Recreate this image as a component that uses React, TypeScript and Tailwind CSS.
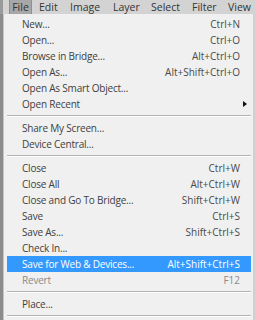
// App.tsx
type Item =
  | { kind: "item"; label: string; shortcut?: string; sub?: boolean; active?: boolean; disabled?: boolean }
  | { kind: "sep" };

const items: Item[] = [
  { kind: "item", label: "New...", shortcut: "Ctrl+N" },
  { kind: "item", label: "Open...", shortcut: "Ctrl+O" },
  { kind: "item", label: "Browse in Bridge...", shortcut: "Alt+Ctrl+O" },
  { kind: "item", label: "Open As...", shortcut: "Alt+Shift+Ctrl+O" },
  { kind: "item", label: "Open As Smart Object..." },
  { kind: "item", label: "Open Recent", sub: true },
  { kind: "sep" },
  { kind: "item", label: "Share My Screen..." },
  { kind: "item", label: "Device Central..." },
  { kind: "sep" },
  { kind: "item", label: "Close", shortcut: "Ctrl+W" },
  { kind: "item", label: "Close All", shortcut: "Alt+Ctrl+W" },
  { kind: "item", label: "Close and Go To Bridge...", shortcut: "Shift+Ctrl+W" },
  { kind: "item", label: "Save", shortcut: "Ctrl+S" },
  { kind: "item", label: "Save As...", shortcut: "Shift+Ctrl+S" },
  { kind: "item", label: "Check In..." },
  { kind: "item", label: "Save for Web & Devices...", shortcut: "Alt+Shift+Ctrl+S", active: true },
  { kind: "item", label: "Revert", shortcut: "F12", disabled: true },
  { kind: "sep" },
  { kind: "item", label: "Place..." },
  { kind: "sep" },
];

const MenuBar = () => (
  <div className="flex h-[14px] items-center bg-[#d3d3d3] text-[10.5px] leading-none text-[#333333]">
    <div className="w-[3px] h-full bg-[#9a9a9a]" />
    <div className="w-[6px]" />
    <div className="w-[23px] h-full flex items-center justify-center bg-[#a7a7a7] border-x border-[#8f8f8f]">File</div>
    <div className="w-[38px] pl-[7px]">Edit</div>
    <div className="w-[43px]">Image</div>
    <div className="w-[38px]">Layer</div>
    <div className="w-[41px]">Select</div>
    <div className="w-[36px]">Filter</div>
    <div className="flex-1">View</div>
  </div>
);

export default function App() {
  return (
    <div
      className="w-[255px] h-[320px] overflow-hidden bg-[#f0f0f0]"
      style={{ fontFamily: '"Open Sans", "Noto Sans", sans-serif' }}
    >
      <MenuBar />
      <div className="flex h-[306px]">
        <div className="w-[3px] bg-[#8c8c8c]" />
        <div className="w-[1px] bg-[#c6c6c6]" />
        <div className="flex-1 bg-[#f0f0f0] pt-[2px] pl-[3px] pr-[2px]">
          {items.map((it, i) =>
            it.kind === "sep" ? (
              <div key={i} className="h-[8px] flex flex-col justify-center">
                <div className="h-px bg-[#b4b4b4]" />
                <div className="h-px bg-white" />
              </div>
            ) : (
              <div
                key={i}
                className={`relative h-[16px] flex items-center justify-between pl-[15px] pr-[11px] text-[10px] leading-none ${
                  it.active ? "bg-[#3399ff] text-white" : it.disabled ? "text-[#8a8a8a]" : "text-[#404040]"
                }`}
              >
                <span className="tracking-[-0.2px]">{it.label}</span>
                {it.shortcut && (
                  <span className={it.active ? "text-white" : it.disabled ? "text-[#8a8a8a]" : "text-[#4a4a4a]"}>
                    {it.shortcut}
                  </span>
                )}
                {it.sub && (
                  <span className="absolute right-[4px] top-[5px] w-0 h-0 border-y-[3px] border-y-transparent border-l-[4px] border-l-[#111]" />
                )}
              </div>
            )
          )}
        </div>
        <div className="w-[2px] bg-[#d0d0d0]" />
      </div>
    </div>
  );
}
